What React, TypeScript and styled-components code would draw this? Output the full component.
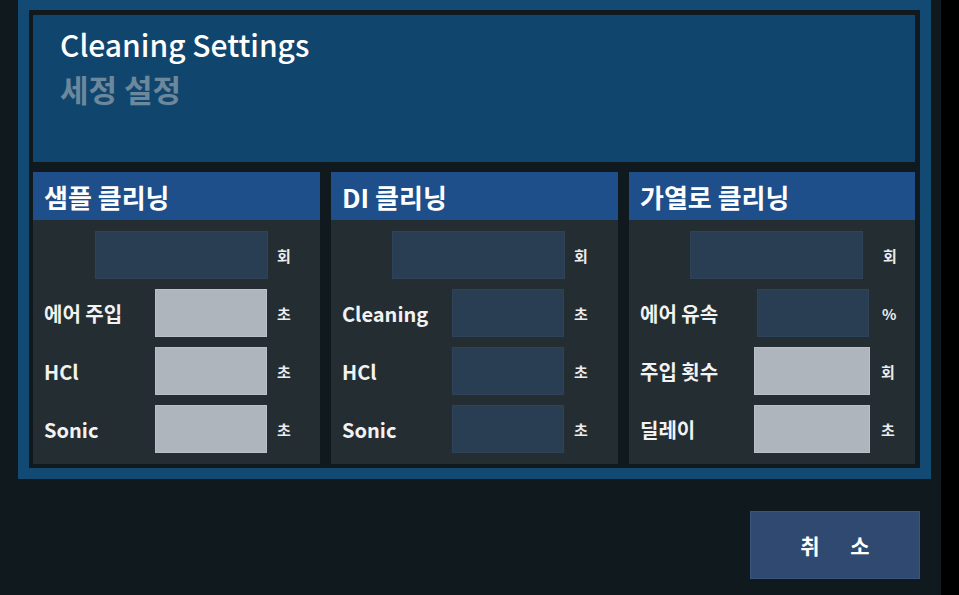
import React from "react";
import styled, { createGlobalStyle } from "styled-components";

const Global = createGlobalStyle`
  html, body { margin: 0; padding: 0; background: #000; }
  body { font-family: "Noto Sans CJK KR", "Noto Sans", sans-serif; }
  * { box-sizing: border-box; }
`;

const Screen = styled.div`
  width: 941px;
  height: 595px;
  background: #0f191e;
  display: flex;
  flex-direction: column;
  overflow: hidden;
`;

const Frame = styled.div`
  margin-left: 18px;
  width: 913px;
  border: 11px solid #124a73;
  border-top-width: 10px;
  background: #0f191e;
  padding: 5px 5px 4px 4px;
  display: flex;
  flex-direction: column;
  gap: 10px;
`;

const Header = styled.div`
  height: 147px;
  background: #10466e;
  padding: 9px 0 0 27px;
  display: flex;
  flex-direction: column;
`;

const Title = styled.div`
  color: #ffffff;
  font-size: 30px;
  font-weight: 500;
  line-height: 40px;
`;

const Subtitle = styled.div`
  color: #6b889d;
  font-size: 31px;
  font-weight: 700;
  line-height: 40px;
  margin-top: 5px;
`;

const Columns = styled.div`
  display: grid;
  grid-template-columns: 287px 287px 286px;
  column-gap: 11px;
`;

const Column = styled.div`
  display: flex;
  flex-direction: column;
`;

const ColumnHeader = styled.div`
  height: 48px;
  background: #1e4f8b;
  color: #ffffff;
  font-size: 26px;
  font-weight: 700;
  display: flex;
  align-items: center;
  padding-left: 11px;
`;

const ColumnBody = styled.div`
  background: #232d32;
  padding: 11px 0 11px 11px;
  display: flex;
  flex-direction: column;
  gap: 10px;
`;

const Row = styled.div<{ $label: number; $input: number }>`
  display: grid;
  grid-template-columns: ${(p) => p.$label}px ${(p) => p.$input}px auto;
  align-items: center;
  height: 48px;
`;

const Label = styled.div`
  color: #f2f2f2;
  font-size: 20px;
  font-weight: 700;
  white-space: nowrap;
`;

const Field = styled.div<{ $light?: boolean }>`
  height: 48px;
  background: ${(p) => (p.$light ? "#aeb5bc" : "#2a3e53")};
  border: 1px solid ${(p) => (p.$light ? "#bac1c6" : "#2e4358")};
`;

const Unit = styled.div<{ $gap: number }>`
  margin-left: ${(p) => p.$gap}px;
  color: #ececec;
  font-size: 15px;
  font-weight: 700;
`;

const Footer = styled.div`
  display: flex;
  justify-content: flex-end;
  padding: 32px 21px 0 0;
`;

const CancelButton = styled.button`
  width: 170px;
  height: 68px;
  background: #2f4971;
  border: 1px solid #3a5580;
  color: #ffffff;
  font-family: "Noto Sans CJK KR", "Noto Sans", sans-serif;
  font-size: 21px;
  font-weight: 700;
  letter-spacing: 13px;
  padding: 0 0 0 13px;
  white-space: pre;
  cursor: pointer;
`;

type RowDef = { label: string; unit: string; start: number; width: number; unitAt: number; light?: boolean };

const cols: { title: string; rows: RowDef[] }[] = [
  {
    title: "샘플 클리닝",
    rows: [
      { label: "", unit: "회", start: 62, width: 173, unitAt: 244 },
      { label: "에어 주입", unit: "초", start: 122, width: 112, unitAt: 244, light: true },
      { label: "HCl", unit: "초", start: 122, width: 112, unitAt: 244, light: true },
      { label: "Sonic", unit: "초", start: 122, width: 112, unitAt: 244, light: true },
    ],
  },
  {
    title: "DI 클리닝",
    rows: [
      { label: "", unit: "회", start: 61, width: 173, unitAt: 243 },
      { label: "Cleaning", unit: "초", start: 121, width: 112, unitAt: 243 },
      { label: "HCl", unit: "초", start: 121, width: 112, unitAt: 243 },
      { label: "Sonic", unit: "초", start: 121, width: 112, unitAt: 243 },
    ],
  },
  {
    title: "가열로 클리닝",
    rows: [
      { label: "", unit: "회", start: 61, width: 173, unitAt: 254 },
      { label: "에어 유속", unit: "%", start: 128, width: 112, unitAt: 253 },
      { label: "주입 횟수", unit: "회", start: 125, width: 116, unitAt: 252, light: true },
      { label: "딜레이", unit: "초", start: 125, width: 116, unitAt: 252, light: true },
    ],
  },
];

export default function App() {
  return (
    <>
      <Global />
      <Screen>
        <Frame>
          <Header>
            <Title>Cleaning Settings</Title>
            <Subtitle>세정 설정</Subtitle>
          </Header>
          <Columns>
            {cols.map((c) => (
              <Column key={c.title}>
                <ColumnHeader>{c.title}</ColumnHeader>
                <ColumnBody>
                  {c.rows.map((r, i) => (
                    <Row key={i} $label={r.start - 11} $input={r.width}>
                      <Label>{r.label}</Label>
                      <Field $light={r.light} />
                      <Unit $gap={r.unitAt - r.start - r.width}>{r.unit}</Unit>
                    </Row>
                  ))}
                </ColumnBody>
              </Column>
            ))}
          </Columns>
        </Frame>
        <Footer>
          <CancelButton>{"취 소"}</CancelButton>
        </Footer>
      </Screen>
    </>
  );
}
